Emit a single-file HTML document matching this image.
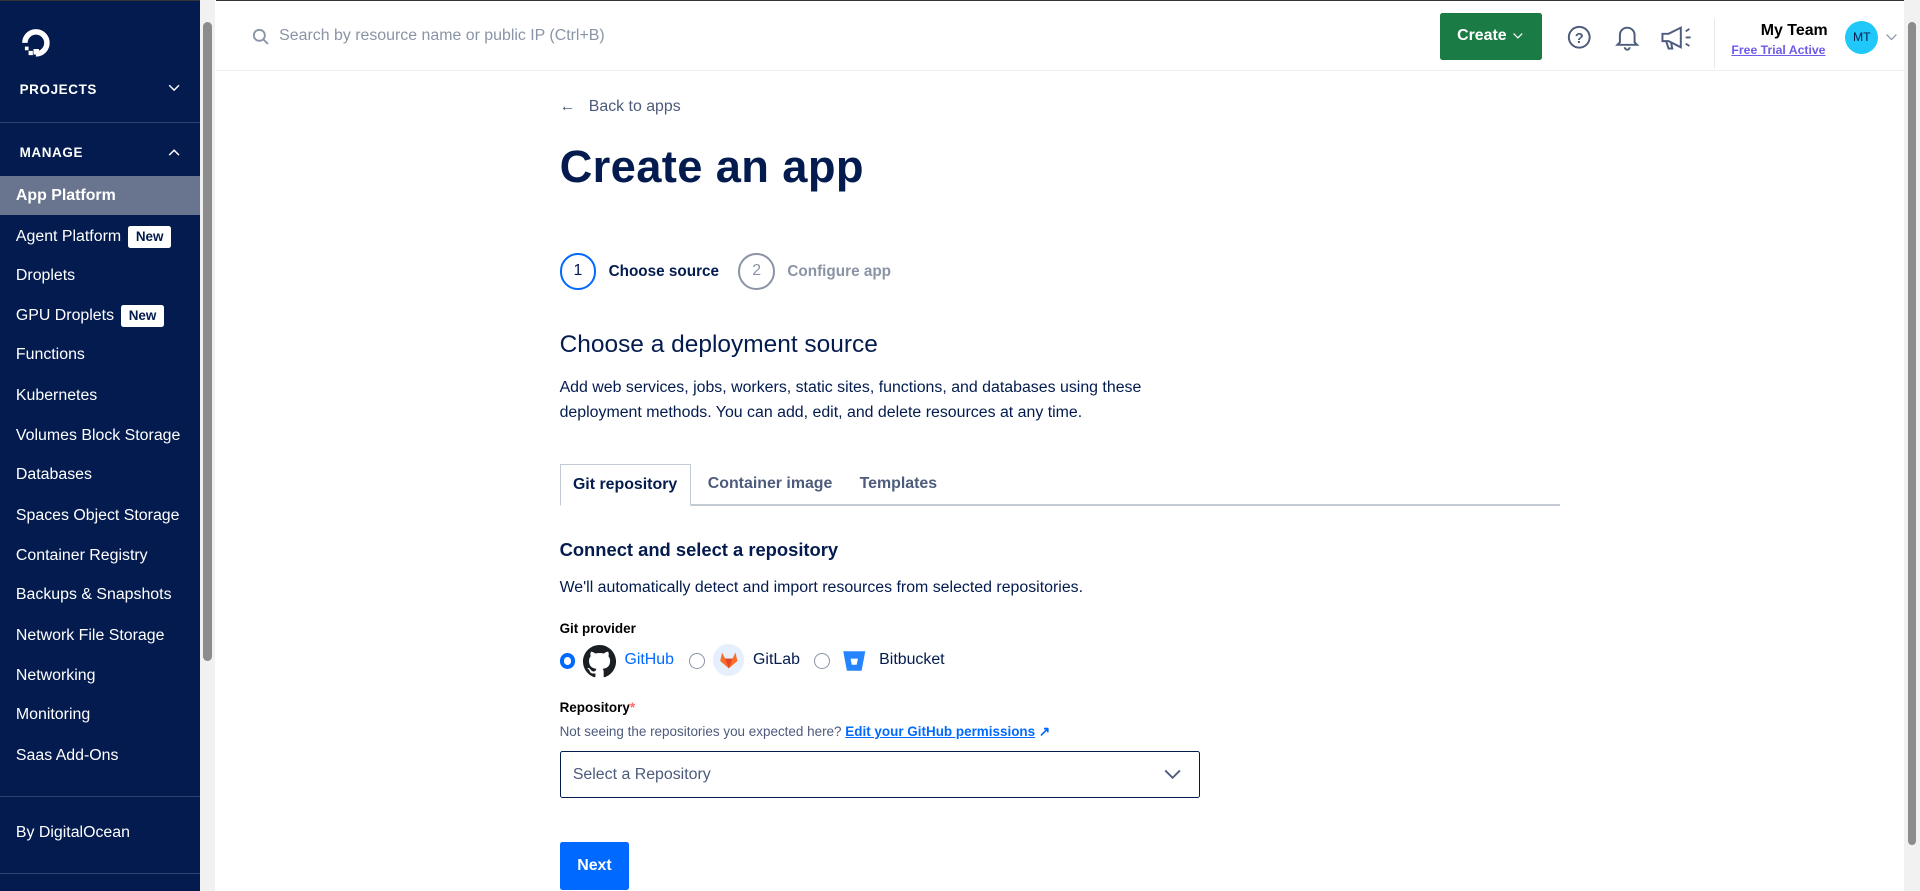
<!DOCTYPE html>
<html><head><meta charset="utf-8">
<style>
html{zoom:1.22449}
*{box-sizing:border-box;margin:0;padding:0}
body{width:1568px;height:728px;overflow:hidden;font-family:"Liberation Sans",sans-serif;background:#fff;position:relative;color:#031b4e}
.sb{position:absolute;left:0;top:0;width:163px;height:728px;background:#031b4e;color:#fff;border-top:1px solid #333}
.sb .h{position:absolute;left:16px;font-size:11px;font-weight:bold;letter-spacing:.5px}
.sb .it{position:absolute;left:0;width:163px;height:32px;line-height:32px;padding-left:13px;font-size:13px}
.new{display:inline-block;background:#fff;color:#031b4e;font-size:11px;font-weight:bold;border-radius:2px;padding:0 6px;line-height:18px;margin-left:6px}
.scr{position:absolute;left:163px;top:0;width:13px;height:728px;background:#f1f1f1}
.scr2{position:absolute;left:1555px;top:0;width:13px;height:728px;background:#f1f1f1}
.thumb{position:absolute;left:3px;width:7px;background:#8c8c8c;border-radius:4px}
.top{position:absolute;left:176px;top:0;width:1379px;height:58px;border-bottom:1px solid #eef0f3;border-top:1px solid #333}
.a{position:absolute}
</style></head><body>
<div class="sb">
 <svg class="a" style="left:16px;top:21px" width="27" height="27" viewBox="0 0 27 27"><path d="M4 13 A9 9 0 1 1 13 22" fill="none" stroke="#fff" stroke-width="4.5"/><rect x="11" y="18" width="4.5" height="4.5" fill="#fff"/><rect x="7" y="19.5" width="3.5" height="3.5" fill="#fff"/><rect x="4" y="16" width="3" height="3" fill="#fff"/></svg>
 <div class="h" style="top:66px">PROJECTS</div>
 <svg class="a" style="left:137px;top:68px" width="10" height="6" viewBox="0 0 10 6"><path d="M1 1l4 4 4-4" fill="none" stroke="#fff" stroke-width="1.2"/></svg>
 <div class="a" style="left:0;top:99px;width:163px;height:1px;background:#2c4272"></div>
 <div class="h" style="top:118px">MANAGE</div>
 <svg class="a" style="left:137px;top:121px" width="10" height="6" viewBox="0 0 10 6"><path d="M1 5l4-4 4 4" fill="none" stroke="#fff" stroke-width="1.2"/></svg>
 <div class="it" style="top:143px;background:#69758f;font-weight:bold">App Platform</div>
 <div class="it" style="top:176px">Agent Platform<span class="new">New</span></div>
 <div class="it" style="top:208px">Droplets</div>
 <div class="it" style="top:241px">GPU Droplets<span class="new">New</span></div>
 <div class="it" style="top:273px">Functions</div>
 <div class="it" style="top:306px">Kubernetes</div>
 <div class="it" style="top:339px">Volumes Block Storage</div>
 <div class="it" style="top:371px">Databases</div>
 <div class="it" style="top:404px">Spaces Object Storage</div>
 <div class="it" style="top:437px">Container Registry</div>
 <div class="it" style="top:469px">Backups &amp; Snapshots</div>
 <div class="it" style="top:502px">Network File Storage</div>
 <div class="it" style="top:535px">Networking</div>
 <div class="it" style="top:567px">Monitoring</div>
 <div class="it" style="top:600px">Saas Add-Ons</div>
 <div class="a" style="left:0;top:649px;width:163px;height:1px;background:#2c4272"></div>
 <div class="it" style="top:663px">By DigitalOcean</div>
 <div class="a" style="left:0;top:712px;width:163px;height:1px;background:#2c4272"></div>
</div>
<div class="scr"><div class="thumb" style="top:18px;height:522px"></div></div>
<div class="scr2"><div class="thumb" style="top:18px;height:672px"></div></div>
<div class="top">
 <svg class="a" style="left:30px;top:22px" width="14" height="14" viewBox="0 0 14 14"><circle cx="6" cy="6" r="4.5" fill="none" stroke="#8a94a6" stroke-width="1.5"/><path d="M9.5 9.5L13 13" stroke="#8a94a6" stroke-width="1.5"/></svg>
 <div class="a" style="left:52px;top:21px;font-size:13px;color:#8a94a6">Search by resource name or public IP (Ctrl+B)</div>
 <div class="a" style="left:1000px;top:10px;width:83px;height:38px;background:#1b7b44;border-radius:2px;color:#fff;font-weight:bold;font-size:13px;line-height:38px;padding-left:14px">Create</div>
 <svg class="a" style="left:1060px;top:26px" width="8" height="5" viewBox="0 0 8 5"><path d="M.5.5l3.5 3.5 3.5-3.5" fill="none" stroke="#fff" stroke-width="1"/></svg>
 <svg class="a" style="left:1104px;top:20px" width="20" height="20" viewBox="0 0 20 20"><circle cx="10" cy="10" r="8.5" fill="none" stroke="#4d5b7c" stroke-width="1.6"/><text x="10" y="14.5" font-size="12" font-weight="bold" text-anchor="middle" fill="#4d5b7c" font-family="Liberation Sans">?</text></svg>
 <svg class="a" style="left:1143px;top:19px" width="20" height="22" viewBox="0 0 20 22"><path d="M4 15V9a6 6 0 0 1 12 0v6l2 2H2z M8 19a2 2 0 0 0 4 0" fill="none" stroke="#4d5b7c" stroke-width="1.6"/></svg>
 <svg class="a" style="left:1180px;top:19px" width="30" height="22" viewBox="0 0 30 22"><path d="M2 8h5l10-5v16L7 14H2z M5 14l2 6h3l-1-5" fill="none" stroke="#4d5b7c" stroke-width="1.6"/><path d="M21 6l3-2M21 11h4M21 16l3 2" stroke="#4d5b7c" stroke-width="1.5"/></svg>
 <div class="a" style="left:1224px;top:15px;width:1px;height:40px;background:#e5e8ed"></div>
 <div class="a" style="left:1262px;top:17px;font-size:13px;font-weight:bold;color:#000">My Team</div>
 <div class="a" style="left:1238px;top:34px;font-size:10px;font-weight:bold;color:#6c5ce7;text-decoration:underline">Free Trial Active</div>
 <div class="a" style="left:1331px;top:16px;width:27px;height:27px;border-radius:50%;background:#1fc8f8;font-size:10px;text-align:center;line-height:27px;color:#031b4e">MT</div>
 <svg class="a" style="left:1364px;top:27px" width="9" height="6" viewBox="0 0 9 6"><path d="M.5.5l4 4 4-4" fill="none" stroke="#8a94a6" stroke-width="1"/></svg>
</div>
<div class="a" style="left:457px;top:80px;font-size:13px;color:#4d5b7c">&larr;&nbsp;&nbsp;&nbsp;Back to apps</div>
<div class="a" style="left:457px;top:115px;font-size:37px;font-weight:bold;color:#031b4e;letter-spacing:.3px">Create an app</div>
<div class="a" style="left:457px;top:207px;width:30px;height:30px;border-radius:50%;border:2px solid #0069ff;font-size:13px;text-align:center;line-height:26px">1</div>
<div class="a" style="left:497px;top:215px;font-size:12.5px;font-weight:bold">Choose source</div>
<div class="a" style="left:603px;top:207px;width:30px;height:30px;border-radius:50%;border:2px solid #8a94a6;color:#8a94a6;font-size:13px;text-align:center;line-height:26px">2</div>
<div class="a" style="left:643px;top:215px;font-size:12.5px;font-weight:bold;color:#8a94a6">Configure app</div>
<div class="a" style="left:457px;top:270px;font-size:20px;color:#031b4e">Choose a deployment source</div>
<div class="a" style="left:457px;top:306px;font-size:13px;line-height:21px;color:#031b4e">Add web services, jobs, workers, static sites, functions, and databases using these<br>deployment methods. You can add, edit, and delete resources at any time.</div>
<div class="a" style="left:457px;top:412px;width:817px;height:1px;background:#c4cad4"></div>
<div class="a" style="left:457px;top:379px;width:107px;height:34px;border:1px solid #c4cad4;border-bottom:1px solid #fff;background:#fff;font-size:13px;font-weight:bold;text-align:center;line-height:32px">Git repository</div>
<div class="a" style="left:578px;top:388px;font-size:13px;font-weight:bold;color:#4d5b7c">Container image</div>
<div class="a" style="left:702px;top:388px;font-size:13px;font-weight:bold;color:#4d5b7c">Templates</div>
<div class="a" style="left:457px;top:440px;font-size:15px;font-weight:bold">Connect and select a repository</div>
<div class="a" style="left:457px;top:473px;font-size:13px">We'll automatically detect and import resources from selected repositories.</div>
<div class="a" style="left:457px;top:507px;font-size:11px;font-weight:bold;color:#000">Git provider</div>
<div class="a" style="left:457px;top:533px;width:13px;height:13px;border-radius:50%;border:4px solid #0069ff"></div>
<svg class="a" style="left:476px;top:527px" width="27" height="27" viewBox="0 0 16 16"><path fill="#1b1f23" d="M8 0C3.58 0 0 3.58 0 8c0 3.54 2.29 6.53 5.47 7.59.4.07.55-.17.55-.38 0-.19-.01-.82-.01-1.49-2.01.37-2.53-.49-2.69-.94-.09-.23-.48-.94-.82-1.13-.28-.15-.68-.52-.01-.53.63-.01 1.08.58 1.23.82.72 1.21 1.87.87 2.33.66.07-.52.28-.87.51-1.07-1.78-.2-3.64-.89-3.64-3.95 0-.87.31-1.59.82-2.15-.08-.2-.36-1.02.08-2.12 0 0 .67-.21 2.2.82.64-.18 1.32-.27 2-.27.68 0 1.36.09 2 .27 1.53-1.04 2.2-.82 2.2-.82.44 1.1.16 1.92.08 2.12.51.56.82 1.27.82 2.15 0 3.07-1.87 3.75-3.65 3.95.29.25.54.73.54 1.48 0 1.07-.01 1.93-.01 2.2 0 .21.15.46.55.38A8.013 8.013 0 0 0 16 8c0-4.42-3.58-8-8-8z"/></svg>
<div class="a" style="left:510px;top:532px;font-size:13px;color:#0069ff">GitHub</div>
<div class="a" style="left:563px;top:533px;width:13px;height:13px;border-radius:50%;border:1px solid #8a94a6"></div>
<div class="a" style="left:582px;top:526px;width:26px;height:26px;border-radius:50%;background:#e5effd"></div>
<svg class="a" style="left:587px;top:531px" width="16" height="16" viewBox="0 0 16 16"><path d="M8 15L1 9l1.5-7L5 7h6l2.5-5L15 9z" fill="#fc6d26"/><path d="M8 15L5 7h6z" fill="#e24329"/></svg>
<div class="a" style="left:615px;top:532px;font-size:13px">GitLab</div>
<div class="a" style="left:665px;top:533px;width:13px;height:13px;border-radius:50%;border:1px solid #8a94a6"></div>
<svg class="a" style="left:688px;top:531px" width="20" height="18" viewBox="0 0 20 18"><path d="M1 1h18l-3 16H4z" fill="#2684ff"/><path d="M7 7h6l-1 5H8z" fill="#fff"/></svg>
<div class="a" style="left:718px;top:532px;font-size:13px">Bitbucket</div>
<div class="a" style="left:457px;top:572px;font-size:11px;font-weight:bold;color:#000">Repository<span style="color:#ff6b6b">*</span></div>
<div class="a" style="left:457px;top:591px;font-size:11px;color:#4d5b7c">Not seeing the repositories you expected here? <b style="color:#0069ff;text-decoration:underline">Edit your GitHub permissions</b><b style="color:#0069ff"> &#8599;</b></div>
<div class="a" style="left:457px;top:613px;width:523px;height:39px;border:1px solid #031b4e;border-radius:2px;font-size:13px;color:#4d5b7c;line-height:37px;padding-left:10px">Select a Repository</div>
<svg class="a" style="left:951px;top:627px" width="14" height="10" viewBox="0 0 14 10"><path d="M1 2l6 6 6-6" fill="none" stroke="#4d5b7c" stroke-width="1.5"/></svg>
<div class="a" style="left:457px;top:688px;width:57px;height:39px;background:#0069ff;border-radius:2px;color:#fff;font-size:13px;font-weight:bold;text-align:center;line-height:39px">Next</div>
</body></html>
